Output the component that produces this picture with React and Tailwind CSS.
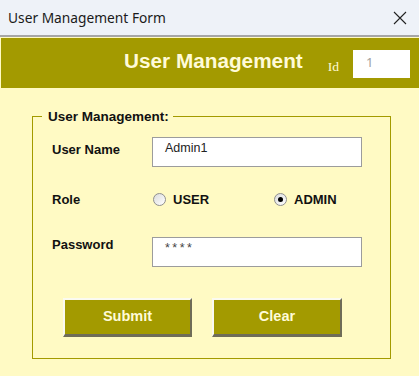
import React from 'react';

const Radio = ({ checked, label, className = '' }) => (
  <div className={`flex items-center ${className}`}>
    <div className="w-[13px] h-[13px] rounded-full border border-[#8f8f8f] bg-gradient-to-br from-[#dcdcdc] to-white flex items-center justify-center">
      {checked && <div className="w-[5px] h-[5px] rounded-full bg-black" />}
    </div>
    <span className="ml-[7px] text-[13px] font-bold leading-[15px] text-[#111]">{label}</span>
  </div>
);

const Field = ({ value, masked }) => (
  <div
    className={`w-[210px] h-[30px] border border-[#9c9c9c] bg-white pl-[12px] pt-[3px] leading-[15px] ${
      masked ? 'text-[12.5px] tracking-[2.5px] text-[#444]' : 'text-[12.5px] text-[#222]'
    }`}
  >
    {value}
  </div>
);

const Btn = ({ children, w }) => (
  <button
    type="button"
    className={`${w} h-[39px] bg-[#a39a00] border-t-2 border-l-2 border-[#fbfaf0] border-b-[3px] border-r-2 border-b-[#6f6c58] border-r-[#6f6c58] text-[14.5px] font-bold text-[#fffbd8]`}
  >
    {children}
  </button>
);

export default function App() {
  return (
    <div className="w-[419px] h-[376px] overflow-hidden bg-[#fffac4] font-['Liberation_Sans',Arial,sans-serif]">
      {/* WINDOW TITLE */}
      <div className="h-[37px] bg-[#eef2f8] border-b-2 border-[#a6a6a6] flex items-center justify-between pl-[8px] pr-[12px]">
        <span className="font-['Noto_Sans',sans-serif] text-[13.75px] text-[#1a1a1a] leading-[18px]">User Management Form</span>
        <svg width="14" height="14" viewBox="0 0 14 14" className="mt-[1px]">
          <path d="M1 1 L13 13 M13 1 L1 13" stroke="#222" strokeWidth="1.1" fill="none" />
        </svg>
      </div>

      <div className="pt-[1px] pl-[1px]">
        {/* HEADER BAND */}
        <div className="h-[50px] bg-[#a39a00] flex items-center pl-[123px]">
          <h1 className="text-[20.75px] font-bold leading-[24px] text-[#fffbd8] mb-[5px]">User Management</h1>
          <span className="ml-[25px] mt-[8px] font-['Liberation_Serif',serif] text-[13.5px] leading-[16px] text-[#fffbd8]">Id</span>
          <div className="ml-[14px] mt-[2px] w-[57px] h-[28px] bg-white pl-[13px] pt-[4px] text-[13px] leading-[16px] text-[#a0a0a0] font-['Noto_Sans',sans-serif]">
            1
          </div>
        </div>

        {/* FORM GROUP */}
        <fieldset className="ml-[31px] mt-[21px] w-[359px] border border-[#a39a00] pt-[13px] pb-[21px]">
          <legend className="ml-[9px] pl-[6px] pr-[4px] text-[13.5px] font-bold leading-[15px] text-[#111]">User Management:</legend>

          <div className="flex items-start">
            <label className="w-[119px] pl-[19px] mt-[5px] text-[13px] font-bold leading-[15px] text-[#111]">User Name</label>
            <Field value="Admin1" />
          </div>

          <div className="flex items-center h-[20px] mt-[22px]">
            <label className="w-[119px] pl-[19px] text-[13px] font-bold leading-[15px] text-[#111]">Role</label>
            <Radio label="USER" className="ml-[1px] w-[121px]" />
            <Radio label="ADMIN" checked />
          </div>

          <div className="flex items-start mt-[28px]">
            <label className="w-[119px] pl-[19px] text-[13px] font-bold leading-[15px] text-[#111]">Password</label>
            <Field value="****" masked />
          </div>

          <div className="flex gap-[20px] pl-[30px] mt-[31px]">
            <Btn w="w-[129px]">Submit</Btn>
            <Btn w="w-[130px]">Clear</Btn>
          </div>
        </fieldset>
      </div>
    </div>
  );
}
